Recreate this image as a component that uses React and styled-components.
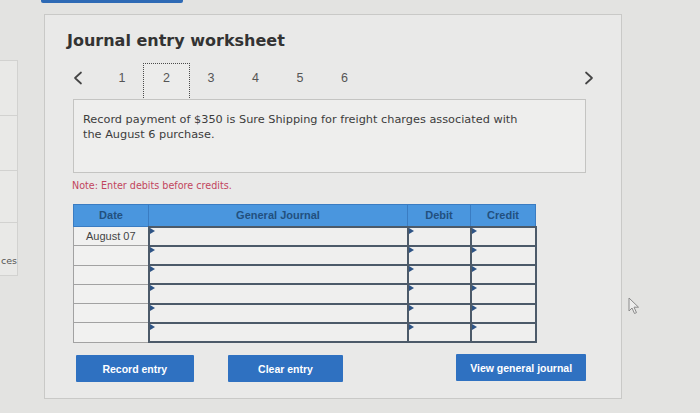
import React from "react";
import styled, { createGlobalStyle, css } from "styled-components";

const Global = createGlobalStyle`
  html, body { margin: 0; padding: 0; }
  body {
    width: 700px;
    height: 413px;
    overflow: hidden;
    background: #e3e3e1;
    font-family: "DejaVu Sans", Verdana, sans-serif;
    color: #3a3a3a;
  }
`;

const Page = styled.div`
  position: relative;
  display: flex;
  align-items: flex-start;
  width: 700px;
  height: 413px;
`;

const Sidebar = styled.div`
  width: 17px;
  margin-top: 60px;
  display: flex;
  flex-direction: column;
  border-top: 1px solid #d2d2d0;
  border-right: 1px solid #d2d2d0;
`;

const SideCell = styled.div`
  height: ${(p) => p.$h}px;
  border-bottom: 1px solid #d2d2d0;
  background: #e9e9e7;
  overflow: hidden;
  display: flex;
  justify-content: flex-end;
  align-items: flex-end;
  padding-bottom: ${(p) => (p.$label ? 9 : 0)}px;
  box-sizing: border-box;
  font-family: "DejaVu Sans", sans-serif;
  font-size: 9.5px;
  color: #555;
  white-space: nowrap;
`;

const Main = styled.div`
  margin-left: 23px;
  display: flex;
  flex-direction: column;
`;

const TopBar = styled.div`
  width: 142px;
  height: 3px;
  background: #2e6ab5;
  border-radius: 0 0 2px 2px;
`;

const Panel = styled.div`
  margin-top: 11px;
  margin-left: 3px;
  width: 578px;
  height: 385px;
  box-sizing: border-box;
  border: 1px solid #c9c9c7;
  background: #e9e9e8;
  padding: 16px 35px 0 28px;
  display: flex;
  flex-direction: column;
`;

const Title = styled.h1`
  margin: 0 0 0 -6px;
  font-family: "DejaVu Sans", Verdana, sans-serif;
  font-weight: bold;
  font-size: 16px;
  line-height: 20px;
  color: #333;
`;

const Nav = styled.div`
  margin-top: 12px;
  height: 37px;
  display: flex;
  align-items: center;
`;

const Arrow = styled.div`
  width: ${(p) => p.$w}px;
  display: flex;
  justify-content: ${(p) => (p.$right ? "flex-end" : "flex-start")};
  align-items: center;
  margin-right: ${(p) => (p.$right ? -8 : 0)}px;
  margin-bottom: 8px;
  svg { display: block; }
`;

const Step = styled.div`
  width: 44.5px;
  height: 37px;
  box-sizing: border-box;
  display: flex;
  align-items: center;
  justify-content: center;
  padding-bottom: 7px;
  font-family: "Liberation Sans", Arial, sans-serif;
  font-size: 12.5px;
  color: #555;
  ${(p) =>
    p.$active &&
    css`
      width: 47px;
      margin: 0 -1.25px;
      border: 1.5px dotted #4a4a4a;
      background: #ececeb;
    `}
`;

const Spacer = styled.div`
  flex: 1;
`;

const Question = styled.div`
  margin-top: -1px;
  height: 74px;
  box-sizing: border-box;
  border: 1px solid #c4c4c2;
  background: #eeeeed;
  padding: 11.5px 9px 0 9px;
`;

const QuestionText = styled.p`
  margin: 0;
  width: 450px;
  font-size: 11.3px;
  line-height: 15.5px;
  color: #3c3c3c;
`;

const Note = styled.div`
  margin-top: 6.5px;
  margin-left: -1px;
  font-size: 9.6px;
  line-height: 12px;
  color: #c2455d;
`;

const Table = styled.table`
  margin-top: 12.5px;
  width: 462px;
  border-collapse: collapse;
  table-layout: fixed;
  font-family: "Liberation Sans", Arial, sans-serif;
`;

const HeadRow = styled.tr`
  height: 22px;
`;

const BodyRow = styled.tr`
  height: 19.3px;
`;

const Th = styled.th`
  height: 20px;
  padding: 0;
  line-height: 1;
  background: #4a96de;
  border: 1px solid #3a7cc2;
  color: #22507f;
  font-size: 11px;
  font-weight: bold;
  text-align: center;
  box-sizing: border-box;
`;

const DateCell = styled.td`
  height: 17px;
  padding: 0;
  line-height: 1;
  border: 1px solid #a2a2a2;
  background: #f1f1f0;
  color: #444;
  font-size: 11px;
  text-align: center;
`;

const InputCell = styled.td`
  position: relative;
  height: 17px;
  padding: 0;
  line-height: 1;
  border: 2px solid #4c5a69;
  background: #efefee;
  &::before {
    content: "";
    position: absolute;
    left: 0;
    top: 0;
    border-top: 3px solid transparent;
    border-bottom: 3px solid transparent;
    border-left: 5px solid #2e5485;
  }
`;

const Buttons = styled.div`
  margin-top: 12px;
  display: flex;
  align-items: flex-start;
`;

const Button = styled.button`
  margin-left: ${(p) => p.$ml}px;
  margin-top: ${(p) => p.$mt || 0}px;
  width: ${(p) => p.$w}px;
  height: 27px;
  border: none;
  border-radius: 1px;
  background: #2f71c1;
  color: #fff;
  font-family: "Liberation Sans", Arial, sans-serif;
  font-weight: bold;
  font-size: 10.5px;
  padding: 0;
`;

const Cursor = styled.svg`
  position: absolute;
  left: 628px;
  top: 297px;
`;

const Chevron = ({ dir }) => (
  <svg width="10" height="14" viewBox="0 0 10 14">
    <path
      d={dir === "left" ? "M8 1.5 L2 7 L8 12.5" : "M2 1.5 L8 7 L2 12.5"}
      fill="none"
      stroke="#444"
      strokeWidth="1.7"
      strokeLinecap="round"
      strokeLinejoin="round"
    />
  </svg>
);

const rows = ["August 07", "", "", "", "", ""];

export default function App() {
  return (
    <>
      <Global />
      <Page>
        <Sidebar>
          <SideCell $h={55} />
          <SideCell $h={55} />
          <SideCell $h={52} />
          <SideCell $h={53} $label>
            ces
          </SideCell>
        </Sidebar>
        <Main>
          <TopBar />
          <Panel>
            <Title>Journal entry worksheet</Title>
            <Nav>
              <Arrow $w={26.75}>
                <Chevron dir="left" />
              </Arrow>
              {[1, 2, 3, 4, 5, 6].map((n) => (
                <Step key={n} $active={n === 2}>
                  {n}
                </Step>
              ))}
              <Spacer />
              <Arrow $w={10} $right>
                <Chevron dir="right" />
              </Arrow>
            </Nav>
            <Question>
              <QuestionText>
                Record payment of $350 is Sure Shipping for freight charges
                associated with the August 6 purchase.
              </QuestionText>
            </Question>
            <Note>Note: Enter debits before credits.</Note>
            <Table>
              <colgroup>
                <col style={{ width: 75 }} />
                <col style={{ width: 259 }} />
                <col style={{ width: 63 }} />
                <col style={{ width: 65 }} />
              </colgroup>
              <thead>
                <HeadRow>
                  <Th>Date</Th>
                  <Th>General Journal</Th>
                  <Th>Debit</Th>
                  <Th>Credit</Th>
                </HeadRow>
              </thead>
              <tbody>
                {rows.map((d, i) => (
                  <BodyRow key={i}>
                    <DateCell>{d}</DateCell>
                    <InputCell />
                    <InputCell />
                    <InputCell />
                  </BodyRow>
                ))}
              </tbody>
            </Table>
            <Buttons>
              <Button $ml={3} $w={118}>Record entry</Button>
              <Button $ml={34} $w={116}>Clear entry</Button>
              <Button $ml={113} $w={130} $mt={-1}>View general journal</Button>
            </Buttons>
          </Panel>
        </Main>
        <Cursor width="13" height="18" viewBox="0 0 13 18">
          <path
            d="M1 1 L1 14 L4 11 L6.5 16.5 L8.5 15.6 L6 10.2 L10.5 10.2 Z"
            fill="#ededec"
            stroke="#8a8a8a"
            strokeWidth="1"
            strokeLinejoin="round"
          />
        </Cursor>
      </Page>
    </>
  );
}
